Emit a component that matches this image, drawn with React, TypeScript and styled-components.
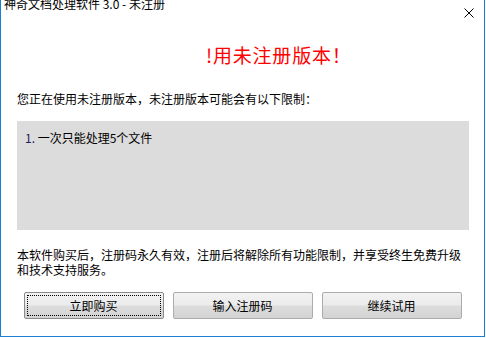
import React from "react";
import styled, { createGlobalStyle } from "styled-components";

const GlobalStyle = createGlobalStyle`
  html, body {
    margin: 0;
    padding: 0;
    background: #fff;
    overflow: hidden;
  }
  body {
    font-family: "Noto Sans CJK SC", "Liberation Sans", sans-serif;
  }
`;

const buttons = [
  { label: "立即购买", focused: true },
  { label: "输入注册码", focused: false },
  { label: "继续试用", focused: false },
];

const App = () => {
  return (
    <>
      <GlobalStyle />
      <Window>
        <TitleBar>
          <Title>神奇文档处理软件 3.0 - 未注册</Title>
          <CloseIcon viewBox="0 0 10 10">
            <path d="M0.5 0.5 L9.5 9.5 M9.5 0.5 L0.5 9.5" stroke="#000" strokeWidth="1" />
          </CloseIcon>
        </TitleBar>
        <Body>
          <Heading>!用未注册版本！</Heading>
          <Intro>您正在使用未注册版本，未注册版本可能会有以下限制：</Intro>
          <LimitBox>
            <LimitItem>
              <Num>1.</Num> 一次只能处理5个文件
            </LimitItem>
          </LimitBox>
          <Note>
            本软件购买后，注册码永久有效，注册后将解除所有功能限制，并享受终生免费升级和技术支持服务。
          </Note>
          <ButtonRow>
            {buttons.map((b) => (
              <DlgButton key={b.label} $focused={b.focused}>
                {b.label}
              </DlgButton>
            ))}
          </ButtonRow>
        </Body>
      </Window>
    </>
  );
};

export default App;

const Window = styled.div`
  width: 485px;
  height: 337px;
  box-sizing: border-box;
  border: 1px solid #1a7fd4;
  border-top: none;
  background: #fff;
  display: flex;
  flex-direction: column;
  color: #000;
`;

const TitleBar = styled.div`
  height: 30px;
  display: flex;
  justify-content: space-between;
  align-items: flex-start;
  padding-left: 3px;
  overflow: hidden;
`;

const Title = styled.div`
  font-size: 12px;
  line-height: 12px;
  margin-top: -2px;
  white-space: nowrap;
`;

const CloseIcon = styled.svg`
  width: 10px;
  height: 10px;
  margin-top: 8px;
  margin-right: 10px;
`;

const Body = styled.div`
  display: flex;
  flex-direction: column;
  padding: 0 15px 0 16px;
`;

const Heading = styled.div`
  margin-top: 13px;
  margin-left: 189px;
  font-size: 19px;
  line-height: 24px;
  letter-spacing: 0.8px;
  color: #ff0000;
  white-space: nowrap;
`;

const Intro = styled.div`
  margin-top: 24px;
  font-size: 12px;
  line-height: 16px;
`;

const LimitBox = styled.div`
  margin-top: 14px;
  height: 109px;
  box-sizing: border-box;
  background: #dcdcdc;
  padding: 9px 8px;
`;

const LimitItem = styled.div`
  font-size: 12px;
  line-height: 16px;
`;

const Num = styled.span`
  color: #1b1b5e;
`;

const Note = styled.div`
  margin-top: 17px;
  font-size: 12px;
  line-height: 15px;
`;

const ButtonRow = styled.div`
  margin-top: 15px;
  display: flex;
  justify-content: center;
  gap: 9px;
  padding-right: 1px;
`;

const DlgButton = styled.button<{ $focused: boolean }>`
  width: 140px;
  height: 27px;
  box-sizing: border-box;
  border: 1px solid ${(p) => (p.$focused ? "#8a8a8a" : "#acacac")};
  border-radius: 2px;
  background: linear-gradient(#f2f2f2 0%, #ebebeb 48%, #dddddd 52%, #d3d3d3 100%);
  font-family: "Noto Sans CJK SC", "Liberation Sans", sans-serif;
  font-size: 12px;
  color: #000;
  padding: 0;
  outline: ${(p) => (p.$focused ? "1px dotted #000" : "none")};
  outline-offset: -4px;
`;
